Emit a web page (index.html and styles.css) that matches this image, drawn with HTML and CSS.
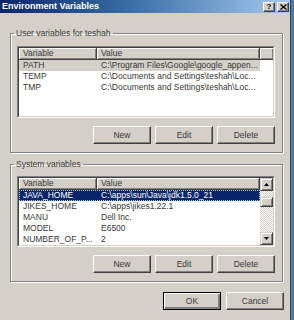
FILE: index.html
```html
<!DOCTYPE html>
<html>
<head>
<meta charset="utf-8">
<link rel="stylesheet" href="styles.css">
</head>
<body>
<div class="window">
  <div class="titlebar">
    <span class="title">Environment Variables</span>
    <div class="tbtns">
      <span class="tbtn">?</span>
      <span class="tbtn">
        <svg width="7" height="6" viewBox="0 0 7 6"><path d="M0.5 0.5 L6.5 5.5 M6.5 0.5 L0.5 5.5" stroke="#000" stroke-width="1.4"/></svg>
      </span>
    </div>
  </div>
  <div class="content">
    <fieldset class="group">
      <legend>User variables for teshah</legend>
      <div class="list">
        <div class="list-inner">
          <div class="list-main">
            <div class="hdr">
              <div class="hcell c1">Variable</div>
              <div class="hcell c2">Value</div>
              <div class="hcell fill"></div>
            </div>
            <div class="row sel-gray"><div class="c1 cell">PATH</div><div class="c2 cell">C:\Program Files\Google\google_appen...</div></div>
            <div class="row"><div class="c1 cell">TEMP</div><div class="c2 cell">C:\Documents and Settings\teshah\Loc...</div></div>
            <div class="row"><div class="c1 cell">TMP</div><div class="c2 cell">C:\Documents and Settings\teshah\Loc...</div></div>
          </div>
        </div>
      </div>
      <div class="btnrow">
        <button class="btn">New</button>
        <button class="btn">Edit</button>
        <button class="btn">Delete</button>
      </div>
    </fieldset>

    <fieldset class="group group2">
      <legend>System variables</legend>
      <div class="list list2">
        <div class="list-inner">
          <div class="list-main">
            <div class="hdr">
              <div class="hcell c1">Variable</div>
              <div class="hcell c2">Value</div>
            </div>
            <div class="row sel-blue"><div class="c1 cell">JAVA_HOME</div><div class="c2 cell">C:\apps\sun\Java\jdk1.5.0_21</div></div>
            <div class="row"><div class="c1 cell">JIKES_HOME</div><div class="c2 cell">C:\apps\jikes1.22.1</div></div>
            <div class="row"><div class="c1 cell">MANU</div><div class="c2 cell">Dell Inc.</div></div>
            <div class="row"><div class="c1 cell">MODEL</div><div class="c2 cell">E6500</div></div>
            <div class="row"><div class="c1 cell">NUMBER_OF_P...</div><div class="c2 cell">2</div></div>
          </div>
          <div class="vscroll">
            <div class="sbtn"><svg width="5" height="3" viewBox="0 0 5 3"><polygon points="2.5,0 5,3 0,3" fill="#000"/></svg></div>
            <div class="track"><div class="thumb"></div></div>
            <div class="sbtn"><svg width="5" height="3" viewBox="0 0 5 3"><polygon points="0,0 5,0 2.5,3" fill="#000"/></svg></div>
          </div>
        </div>
      </div>
      <div class="btnrow">
        <button class="btn">New</button>
        <button class="btn">Edit</button>
        <button class="btn">Delete</button>
      </div>
    </fieldset>

    <div class="btnrow dlg">
      <button class="btn default">OK</button>
      <button class="btn">Cancel</button>
    </div>
  </div>
</div>
</body>
</html>
```

FILE: styles.css
```css
* { box-sizing: border-box; }
html, body { margin: 0; padding: 0; }
body {
  background: #4f79a8;
  width: 294px;
  height: 320px;
  overflow: hidden;
  font-family: "Liberation Sans", Arial, sans-serif;
  font-size: 8.5px;
  color: #383838;
}
.window {
  width: 291px;
  height: 320px;
  background: #d4d0c8;
  border-right: 1px solid #404040;
}
.titlebar {
  height: 13px;
  background: linear-gradient(to right, #0a246a 0%, #3a6ea5 45%, #a6caf0 100%);
  display: flex;
  align-items: center;
  justify-content: space-between;
  padding: 0 1px 0 2px;
}
.title {
  color: #fff;
  font-weight: bold;
  font-size: 9px;
  line-height: 13px;
}
.tbtns { display: flex; gap: 2px; }
.tbtn {
  width: 12px;
  height: 10px;
  background: #d4d0c8;
  border: 1px solid;
  border-color: #fff #404040 #404040 #fff;
  box-shadow: inset -1px -1px #808080;
  display: flex;
  align-items: center;
  justify-content: center;
  font-weight: bold;
  font-size: 8px;
  line-height: 8px;
  color: #000;
}
.content {
  padding: 15px 0 0 10px;
}
.group {
  margin: 0;
  width: 273px;
  border: 1px solid #808080;
  box-shadow: 1px 1px 0 #fff, inset 1px 1px 0 #fff;
  padding: 8px 7px 8px 6px;
  min-width: 0;
}
.group2 { margin-top: 6px; padding-top: 7px; }
legend {
  padding: 0 2px;
  margin-left: -3px;
  line-height: 10px;
  height: 10px;
}
.list {
  height: 72px;
  border: 1px solid;
  border-color: #808080 #fff #fff #808080;
}
.list2 { height: 71px; }
.list-inner {
  height: 100%;
  border: 1px solid;
  border-color: #404040 #d4d0c8 #d4d0c8 #404040;
  background: #fff;
  display: flex;
}
.list-main { flex: 1; min-width: 0; }
.hdr {
  display: flex;
  height: 12px;
}
.hcell {
  height: 12px;
  line-height: 11px;
  padding-left: 4px;
  background: #d4d0c8;
  border-right: 1px solid #404040;
  border-bottom: 1px solid #404040;
  box-shadow: inset 1px 1px #fff, inset -1px -1px #808080;
}
.hcell.fill { flex: 1; border-right: none; }
.c1 { width: 78px; flex: none; }
.c2 { width: 163px; flex: none; }
.row {
  display: flex;
  height: 11px;
  line-height: 11px;
  width: 241px;
}
.cell {
  padding-left: 4px;
  white-space: nowrap;
  overflow: hidden;
}
.sel-gray { background: #d4d0c8; }
.sel-blue {
  background: #0a246a;
  color: #fff;
  outline: 1px dotted #a6caf0;
  outline-offset: -1px;
}
.vscroll {
  width: 13px;
  flex: none;
  display: flex;
  flex-direction: column;
}
.sbtn {
  width: 13px;
  height: 13px;
  flex: none;
  background: #d4d0c8;
  border: 1px solid;
  border-color: #d4d0c8 #404040 #404040 #d4d0c8;
  box-shadow: inset 1px 1px #fff, inset -1px -1px #808080;
  display: flex;
  align-items: center;
  justify-content: center;
}
.track {
  flex: 1;
  background-color: #fff;
  background-image: conic-gradient(#d4d0c8 25%, #fff 0 50%, #d4d0c8 0 75%, #fff 0);
  background-size: 2px 2px;
  padding-top: 6px;
}
.thumb {
  height: 10px;
  background: #d4d0c8;
  border: 1px solid;
  border-color: #d4d0c8 #404040 #404040 #d4d0c8;
  box-shadow: inset 1px 1px #fff, inset -1px -1px #808080;
}
.btnrow {
  display: flex;
  justify-content: flex-end;
  gap: 4px;
  margin-top: 8px;
}
.btn {
  width: 58px;
  height: 18px;
  padding: 0;
  margin: 0;
  font-family: "Liberation Sans", Arial, sans-serif;
  font-size: 8.5px;
  color: #383838;
  background: #d4d0c8;
  border: 1px solid;
  border-color: #fff #404040 #404040 #fff;
  box-shadow: inset -1px -1px #808080;
  border-radius: 0;
}
.dlg {
  margin-top: 10px;
  width: 274px;
  gap: 5px;
}
.btn.default {
  border-color: #000;
  box-shadow: inset 1px 1px #fff, inset -2px -2px #808080, inset -1px -1px #404040;
}
```
